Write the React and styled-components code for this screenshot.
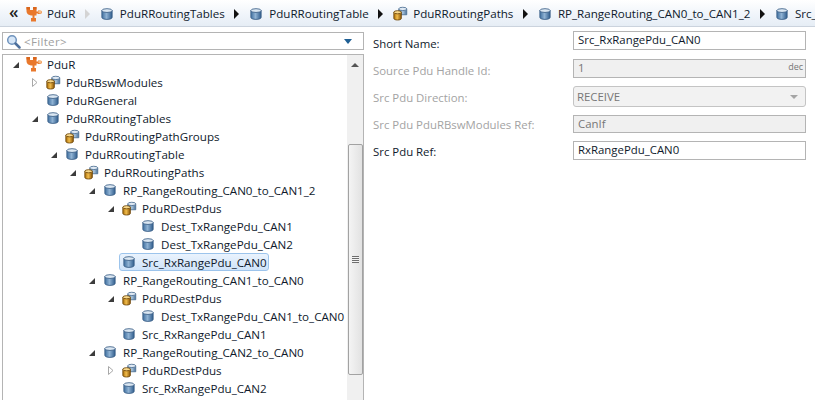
import React from "react";
import styled, { createGlobalStyle } from "styled-components";

const GlobalStyle = createGlobalStyle`
  html, body {
    margin: 0;
    padding: 0;
    background: #fff;
  }
  body {
    font-family: "Open Sans", "Noto Sans", sans-serif;
    font-size: 11.6px;
    color: #0f1a2c;
  }
`;

const treeData = [
  { level: 0, arrow: "open", icon: "module", label: "PduR" },
  { level: 1, arrow: "closed", icon: "stack", label: "PduRBswModules" },
  { level: 1, icon: "cyl", label: "PduRGeneral" },
  { level: 1, arrow: "open", icon: "cyl", label: "PduRRoutingTables" },
  { level: 2, icon: "stack", label: "PduRRoutingPathGroups" },
  { level: 2, arrow: "open", icon: "cyl", label: "PduRRoutingTable" },
  { level: 3, arrow: "open", icon: "stack", label: "PduRRoutingPaths" },
  { level: 4, arrow: "open", icon: "cyl", label: "RP_RangeRouting_CAN0_to_CAN1_2" },
  { level: 5, arrow: "open", icon: "stack", label: "PduRDestPdus" },
  { level: 6, icon: "cyl", label: "Dest_TxRangePdu_CAN1" },
  { level: 6, icon: "cyl", label: "Dest_TxRangePdu_CAN2" },
  { level: 5, icon: "cyl", label: "Src_RxRangePdu_CAN0", selected: true },
  { level: 4, arrow: "open", icon: "cyl", label: "RP_RangeRouting_CAN1_to_CAN0" },
  { level: 5, arrow: "open", icon: "stack", label: "PduRDestPdus" },
  { level: 6, icon: "cyl", label: "Dest_TxRangePdu_CAN1_to_CAN0" },
  { level: 5, icon: "cyl", label: "Src_RxRangePdu_CAN1" },
  { level: 4, arrow: "open", icon: "cyl", label: "RP_RangeRouting_CAN2_to_CAN0" },
  { level: 5, arrow: "closed", icon: "stack", label: "PduRDestPdus" },
  { level: 5, icon: "cyl", label: "Src_RxRangePdu_CAN2" },
];

const crumbs = [
  { icon: "module", label: "PduR", dim: true },
  { icon: "cyl", label: "PduRRoutingTables" },
  { icon: "cyl", label: "PduRRoutingTable" },
  { icon: "stack", label: "PduRRoutingPaths" },
  { icon: "cyl", label: "RP_RangeRouting_CAN0_to_CAN1_2" },
  { icon: "cyl", label: "Src_", last: true },
];

const CylinderIcon = () => (
  <svg width="12" height="12" viewBox="0 0 14 14">
    <defs>
      <linearGradient id="cylBody" x1="0" x2="1" y1="0" y2="0">
        <stop offset="0" stopColor="#3f6f9f" />
        <stop offset="0.45" stopColor="#8fb2d3" />
        <stop offset="1" stopColor="#2f5c8c" />
      </linearGradient>
    </defs>
    <path d="M1 3v8c0 1.300 2.700 2.300 6 2.300s6-1 6-2.300V3z" fill="url(#cylBody)" stroke="#3a5f86" strokeWidth="1" />
    <ellipse cx="7" cy="3" rx="6" ry="2.200" fill="#dbe7f2" stroke="#3a5f86" strokeWidth="1" />
  </svg>
);

const StackIcon = () => (
  <svg width="15" height="15" viewBox="0 0 18 17">
    <defs>
      <linearGradient id="stackBlue" x1="0" x2="1" y1="0" y2="0">
        <stop offset="0" stopColor="#5f86ad" />
        <stop offset="0.5" stopColor="#a9c4dc" />
        <stop offset="1" stopColor="#4b739c" />
      </linearGradient>
      <linearGradient id="stackGold" x1="0" x2="1" y1="0" y2="0">
        <stop offset="0" stopColor="#a86c08" />
        <stop offset="0.45" stopColor="#f2bd4c" />
        <stop offset="1" stopColor="#8a5506" />
      </linearGradient>
    </defs>
    <path d="M7 3v7h9.500V3z" fill="url(#stackBlue)" stroke="#4a6d92" />
    <ellipse cx="11.700" cy="3" rx="4.800" ry="2" fill="#dfe9f3" stroke="#4a6d92" />
    <path d="M1 7v7.500c0 1.100 2 1.800 4.500 1.800s4.500-.7 4.500-1.800V7z" fill="url(#stackGold)" stroke="#6b4306" />
    <ellipse cx="5.500" cy="7" rx="4.500" ry="1.900" fill="#f8d98c" stroke="#6b4306" />
  </svg>
);

const ModuleIcon = () => (
  <svg width="16" height="16" viewBox="0 0 16 16">
    <path d="M0.500 1h3.500v3h3V1h3.500v4.500H12V4.500h1.500c1.500 0 2.500.7 2.500 1.800S15 8 13.500 8H12V7.500h-1.500V9.500H8.500V12h1.500v3.500H5V12h1.500V9.500C3 9.500 0.500 8 0.500 5z" fill="#e9782c" />
    <rect x="0.500" y="1" width="3.500" height="2.500" fill="#d9661c" />
    <rect x="7" y="1" width="3.500" height="2.500" fill="#d9661c" />
    <ellipse cx="14" cy="6" rx="1.800" ry="1.400" fill="#f6bd86" />
  </svg>
);

const NodeIcon = ({ kind }) => {
  if (kind === "module") return <ModuleIcon />;
  if (kind === "stack") return <StackIcon />;
  return <CylinderIcon />;
};

const App = () => (
  <Page>
    <GlobalStyle />
    <Breadcrumb>
      <ChevronMark>«</ChevronMark>
      {crumbs.map((crumb) => (
        <React.Fragment key={crumb.label}>
          <CrumbIcon>
            <NodeIcon kind={crumb.icon} />
          </CrumbIcon>
          <CrumbLabel>{crumb.label}</CrumbLabel>
          {!crumb.last && <CrumbArrow $dim={crumb.dim} />}
        </React.Fragment>
      ))}
    </Breadcrumb>
    <Body>
      <LeftPanel>
        <FilterBox>
          <svg width="15" height="15" viewBox="0 0 15 15">
            <circle cx="6" cy="6" r="4.300" fill="#d6e6f7" stroke="#6f93bd" strokeWidth="1.500" />
            <path d="M9.500 9.500l4 4" stroke="#4c6f9c" strokeWidth="2.500" strokeLinecap="round" />
          </svg>
          <FilterText>&lt;Filter&gt;</FilterText>
          <FilterCaret />
        </FilterBox>
        <TreeBox>
          <TreeList>
            {treeData.map((node, index) => (
              <TreeRow key={index} $level={node.level}>
                <Twisty>
                  {node.arrow === "open" && <OpenArrow />}
                  {node.arrow === "closed" && (
                    <svg width="6" height="9" viewBox="0 0 6 9">
                      <path d="M0.500 0.500L5 4.500L0.500 8.500z" fill="#fff" stroke="#a8a8a8" />
                    </svg>
                  )}
                </Twisty>
                <RowContent $selected={node.selected}>
                  <RowIcon>
                    <NodeIcon kind={node.icon} />
                  </RowIcon>
                  <RowLabel>{node.label}</RowLabel>
                </RowContent>
              </TreeRow>
            ))}
          </TreeList>
          <ScrollBar>
            <ScrollUp />
            <ScrollThumb>
              <Grip />
            </ScrollThumb>
          </ScrollBar>
        </TreeBox>
      </LeftPanel>
      <FormPanel>
        <FieldLabel $nudge={4}>Short Name:</FieldLabel>
        <TextField>Src_RxRangePdu_CAN0</TextField>
        <FieldLabel $disabled $nudge={3}>Source Pdu Handle Id:</FieldLabel>
        <TextField $disabled>
          1<DecTag>dec</DecTag>
        </TextField>
        <FieldLabel $disabled $nudge={1}>Src Pdu Direction:</FieldLabel>
        <ComboField>
          RECEIVE
          <ComboCaret />
        </ComboField>
        <FieldLabel $disabled>Src Pdu PduRBswModules Ref:</FieldLabel>
        <TextField $disabled>CanIf</TextField>
        <FieldLabel $nudge={1}>Src Pdu Ref:</FieldLabel>
        <TextField>RxRangePdu_CAN0</TextField>
      </FormPanel>
    </Body>
  </Page>
);

export default App;

// styled
const Page = styled.div`
  width: 815px;
  height: 400px;
  overflow: hidden;
  display: flex;
  flex-direction: column;
`;

const Breadcrumb = styled.div`
  height: 27px;
  box-sizing: border-box;
  padding: 1px 0 0 9px;
  flex: none;
  display: flex;
  align-items: center;
  white-space: nowrap;
  overflow: hidden;
  background: linear-gradient(#ffffff, #eff4fa 60%, #e6edf5);
  border-bottom: 1px solid #cbd3dd;
`;

const ChevronMark = styled.span`
  width: 17px;
  font-size: 17px;
  line-height: 20px;
  margin-top: -3px;
  font-weight: 600;
  color: #222;
  flex: none;
`;

const CrumbIcon = styled.span`
  display: flex;
  flex: none;
  justify-content: center;
  align-items: center;
  width: 16px;
  margin-right: 5px;
`;

const CrumbLabel = styled.span`
  color: #0f1a2c;
  flex: none;
`;

const CrumbArrow = styled.span`
  flex: none;
  width: 0;
  height: 0;
  margin: 0 9px 0 9.5px;
  border-top: 5px solid transparent;
  border-bottom: 5px solid transparent;
  border-left: 5px solid ${(props) => (props.$dim ? "#d4d4d4" : "#111")};
`;

const Body = styled.div`
  flex: 1;
  min-height: 0;
  display: flex;
`;

const LeftPanel = styled.div`
  width: 362px;
  margin-left: 2px;
  padding-top: 5px;
  display: flex;
  flex-direction: column;
  gap: 4px;
  flex: none;
`;

const FilterBox = styled.div`
  height: 18px;
  flex: none;
  box-sizing: border-box;
  border: 1px solid #b4b4b4;
  display: flex;
  align-items: center;
  padding: 0 11px 0 3px;
`;

const FilterText = styled.span`
  flex: 1;
  margin-left: 3px;
  color: #a0a0a0;
  letter-spacing: 0.3px;
`;

const FilterCaret = styled.span`
  width: 0;
  height: 0;
  border-left: 4px solid transparent;
  border-right: 4px solid transparent;
  border-top: 5px solid #1f5f94;
`;

const TreeBox = styled.div`
  flex: 1;
  min-height: 0;
  display: flex;
  border: 1px solid #b4b4b4;
  border-bottom: none;
  box-sizing: border-box;
`;

const TreeList = styled.div`
  flex: 1;
  min-width: 0;
  overflow: hidden;
`;

const TreeRow = styled.div`
  height: 18px;
  display: flex;
  align-items: center;
  padding-left: ${(props) => 5 + props.$level * 19}px;
  white-space: nowrap;
`;

const Twisty = styled.span`
  width: 16px;
  height: 16px;
  flex: none;
  display: flex;
  align-items: center;
  justify-content: center;
`;

const OpenArrow = styled.span`
  width: 0;
  height: 0;
  margin-top: 2px;
  border-bottom: 6px solid #3c3c3c;
  border-left: 6px solid transparent;
`;

const RowContent = styled.div`
  display: flex;
  align-items: center;
  height: 18px;
  box-sizing: border-box;
  padding: 0 1px;
  border: 1px solid ${(props) => (props.$selected ? "#9cc4ec" : "transparent")};
  border-radius: 3px;
  background: ${(props) =>
    props.$selected ? "linear-gradient(#eaf3fd, #cfe3f9)" : "transparent"};
`;

const RowIcon = styled.span`
  width: 16px;
  height: 16px;
  display: flex;
  align-items: center;
  justify-content: center;
  flex: none;
`;

const RowLabel = styled.span`
  margin-left: 5px;
`;

const ScrollBar = styled.div`
  width: 16px;
  flex: none;
  background: #f0f0f0;
  display: flex;
  flex-direction: column;
  align-items: center;
`;

const ScrollUp = styled.span`
  width: 0;
  height: 0;
  margin: 8px 0 77px;
  border-left: 4px solid transparent;
  border-right: 4px solid transparent;
  border-bottom: 4px solid #555;
`;

const ScrollThumb = styled.div`
  width: 15px;
  height: 231px;
  box-sizing: border-box;
  background: linear-gradient(90deg, #f4f4f4, #e2e2e2);
  border: 1px solid #a2a2a2;
  border-radius: 2px;
  display: flex;
  align-items: center;
  justify-content: center;
`;

const Grip = styled.span`
  width: 7px;
  height: 7px;
  background: repeating-linear-gradient(#6e6e6e 0 1px, #f4f4f4 1px 2px);
`;

const FormPanel = styled.div`
  flex: 1;
  padding: 4px 9px 0 9px;
  font-size: 11.4px;
  display: grid;
  grid-template-columns: 200px 233px;
  grid-template-rows: 20px 19px 21px 18px 19px;
  row-gap: 8px;
  align-content: start;
  align-items: center;
`;

const FieldLabel = styled.label`
  padding-top: ${(props) => props.$nudge || 0}px;
  color: ${(props) => (props.$disabled ? "#a3a3a3" : "#0f1a2c")};
`;

const TextField = styled.div`
  align-self: start;
  height: 100%;
  max-height: 19px;
  box-sizing: border-box;
  position: relative;
  border: 1px solid #b4b4b4;
  padding-left: 4px;
  line-height: 16px;
  color: ${(props) => (props.$disabled ? "#777" : "#0f1a2c")};
  background: ${(props) => (props.$disabled ? "#f0f0f0" : "#fff")};
`;

const DecTag = styled.span`
  position: absolute;
  right: 2px;
  top: -1px;
  font-size: 9px;
  color: #777;
`;

const ComboField = styled.div`
  height: 21px;
  box-sizing: border-box;
  border: 1px solid #c4c4c4;
  border-radius: 3px;
  padding: 0 7px 0 3px;
  display: flex;
  align-items: center;
  justify-content: space-between;
  color: #777;
  background: #f2f2f2;
`;

const ComboCaret = styled.span`
  width: 0;
  height: 0;
  border-left: 4px solid transparent;
  border-right: 4px solid transparent;
  border-top: 4px solid #a5a5a5;
`;
